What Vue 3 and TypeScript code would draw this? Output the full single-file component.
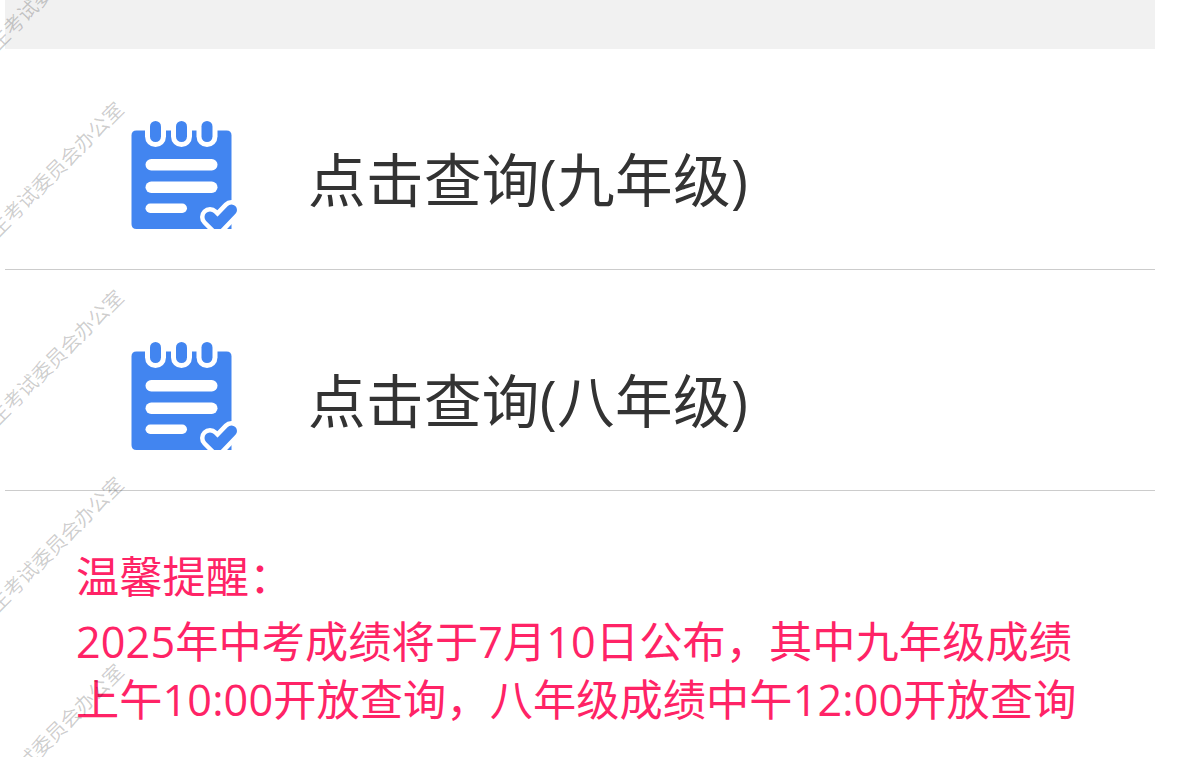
<template>
  <div class="page">
    <div class="top-bar"></div>

    <ul class="entry-list">
      <li v-for="entry in entries" :key="entry" class="entry">
        <svg class="entry-icon" viewBox="0 0 108 108">
          <path
            d="M5.500 9.500H95.500Q100.500 9.500 100.500 14.500V108H5.500Q.5 108 .5 103V14.500Q.5 9.500 5.500 9.500Z"
            fill="#4285f0"
          />
          <g v-for="x in rings" :key="x">
            <path
              :d="`M${x - 10.500} 0V15.500a10.500 10.500 0 0 0 21 0V0Z`"
              fill="#fff"
            />
            <rect :x="x - 5.500" y="0" width="11" height="21" rx="5.500" fill="#4285f0" />
          </g>
          <g fill="#fff">
            <rect x="14.500" y="38" width="72" height="11.500" rx="5.750" />
            <rect x="14.500" y="60.500" width="72" height="11.500" rx="5.750" />
            <rect x="14.500" y="82.500" width="41.500" height="9.500" rx="4.750" />
          </g>
          <path
            d="M79 96L86.500 103.500L100.500 89"
            fill="none"
            stroke="#fff"
            stroke-width="20"
            stroke-linecap="round"
          />
          <path
            d="M79 96L86.500 103.500L100.500 89"
            fill="none"
            stroke="#4285f0"
            stroke-width="11"
            stroke-linecap="round"
          />
        </svg>
        <span class="entry-title">{{ entry }}</span>
      </li>
    </ul>

    <div class="notice">
      <p class="notice-title">温馨提醒：</p>
      <p v-for="line in notice" :key="line" class="notice-line">{{ line }}</p>
    </div>

    <!-- Repeating watermark on top of everything -->
    <div class="watermark">
      <div v-for="n in 5" :key="n" class="watermark-tile">
        <span class="watermark-text">生考试委员会办公室</span>
      </div>
    </div>
  </div>
</template>

<script setup lang="ts">
const entries: string[] = ["点击查询(九年级)", "点击查询(八年级)"];

const notice: string[] = [
  "2025年中考成绩将于7月10日公布，其中九年级成绩",
  "上午10:00开放查询，八年级成绩中午12:00开放查询",
];

const rings: number[] = [24.5, 50.5, 76];
</script>

<style>
body {
  margin: 0;
  background: #fff;
}
</style>

<style scoped>
.page {
  position: relative;
  box-sizing: border-box;
  height: 757px;
  padding: 0 28px 0 5px;
  overflow: hidden;
  font-family: "Open Sans", "Noto Sans CJK SC", sans-serif;
}

.top-bar {
  height: 49px;
  background: #f1f1f1;
}

.entry-list {
  margin: 0;
  padding: 0;
  list-style: none;
}

.entry {
  display: flex;
  align-items: center;
  box-sizing: border-box;
  height: 221px;
  padding: 32px 0 0 126px;
  border-bottom: 1px solid #ccc;
}

.entry-icon {
  flex: none;
  width: 108px;
  height: 108px;
  margin-bottom: 40px;
  align-self: flex-end;
}

.entry-title {
  align-self: flex-start;
  margin-left: 69px;
  margin-top: 59px;
  font-size: 57.6px;
  line-height: 80px;
  letter-spacing: 0.35px;
  color: #333;
  white-space: nowrap;
}

.notice {
  padding: 57px 0 0 71px;
  font-size: 43.2px;
  line-height: 58px;
  letter-spacing: 0.1px;
  color: #ff2366;
}

.notice-title,
.notice-line {
  margin: 0;
  white-space: nowrap;
}

.notice-title {
  margin-bottom: 7px;
}

.watermark {
  position: absolute;
  top: -74px;
  left: 0;
  pointer-events: none;
}

.watermark-tile {
  position: relative;
  width: 130px;
  height: 187.3px;
}

.watermark-text {
  position: absolute;
  top: -15px;
  right: 7px;
  font-size: 20px;
  line-height: 30px;
  color: rgba(0, 0, 0, 0.2);
  white-space: nowrap;
  transform: rotate(-45deg);
  transform-origin: calc(100% - 10px) 50%;
}
</style>
